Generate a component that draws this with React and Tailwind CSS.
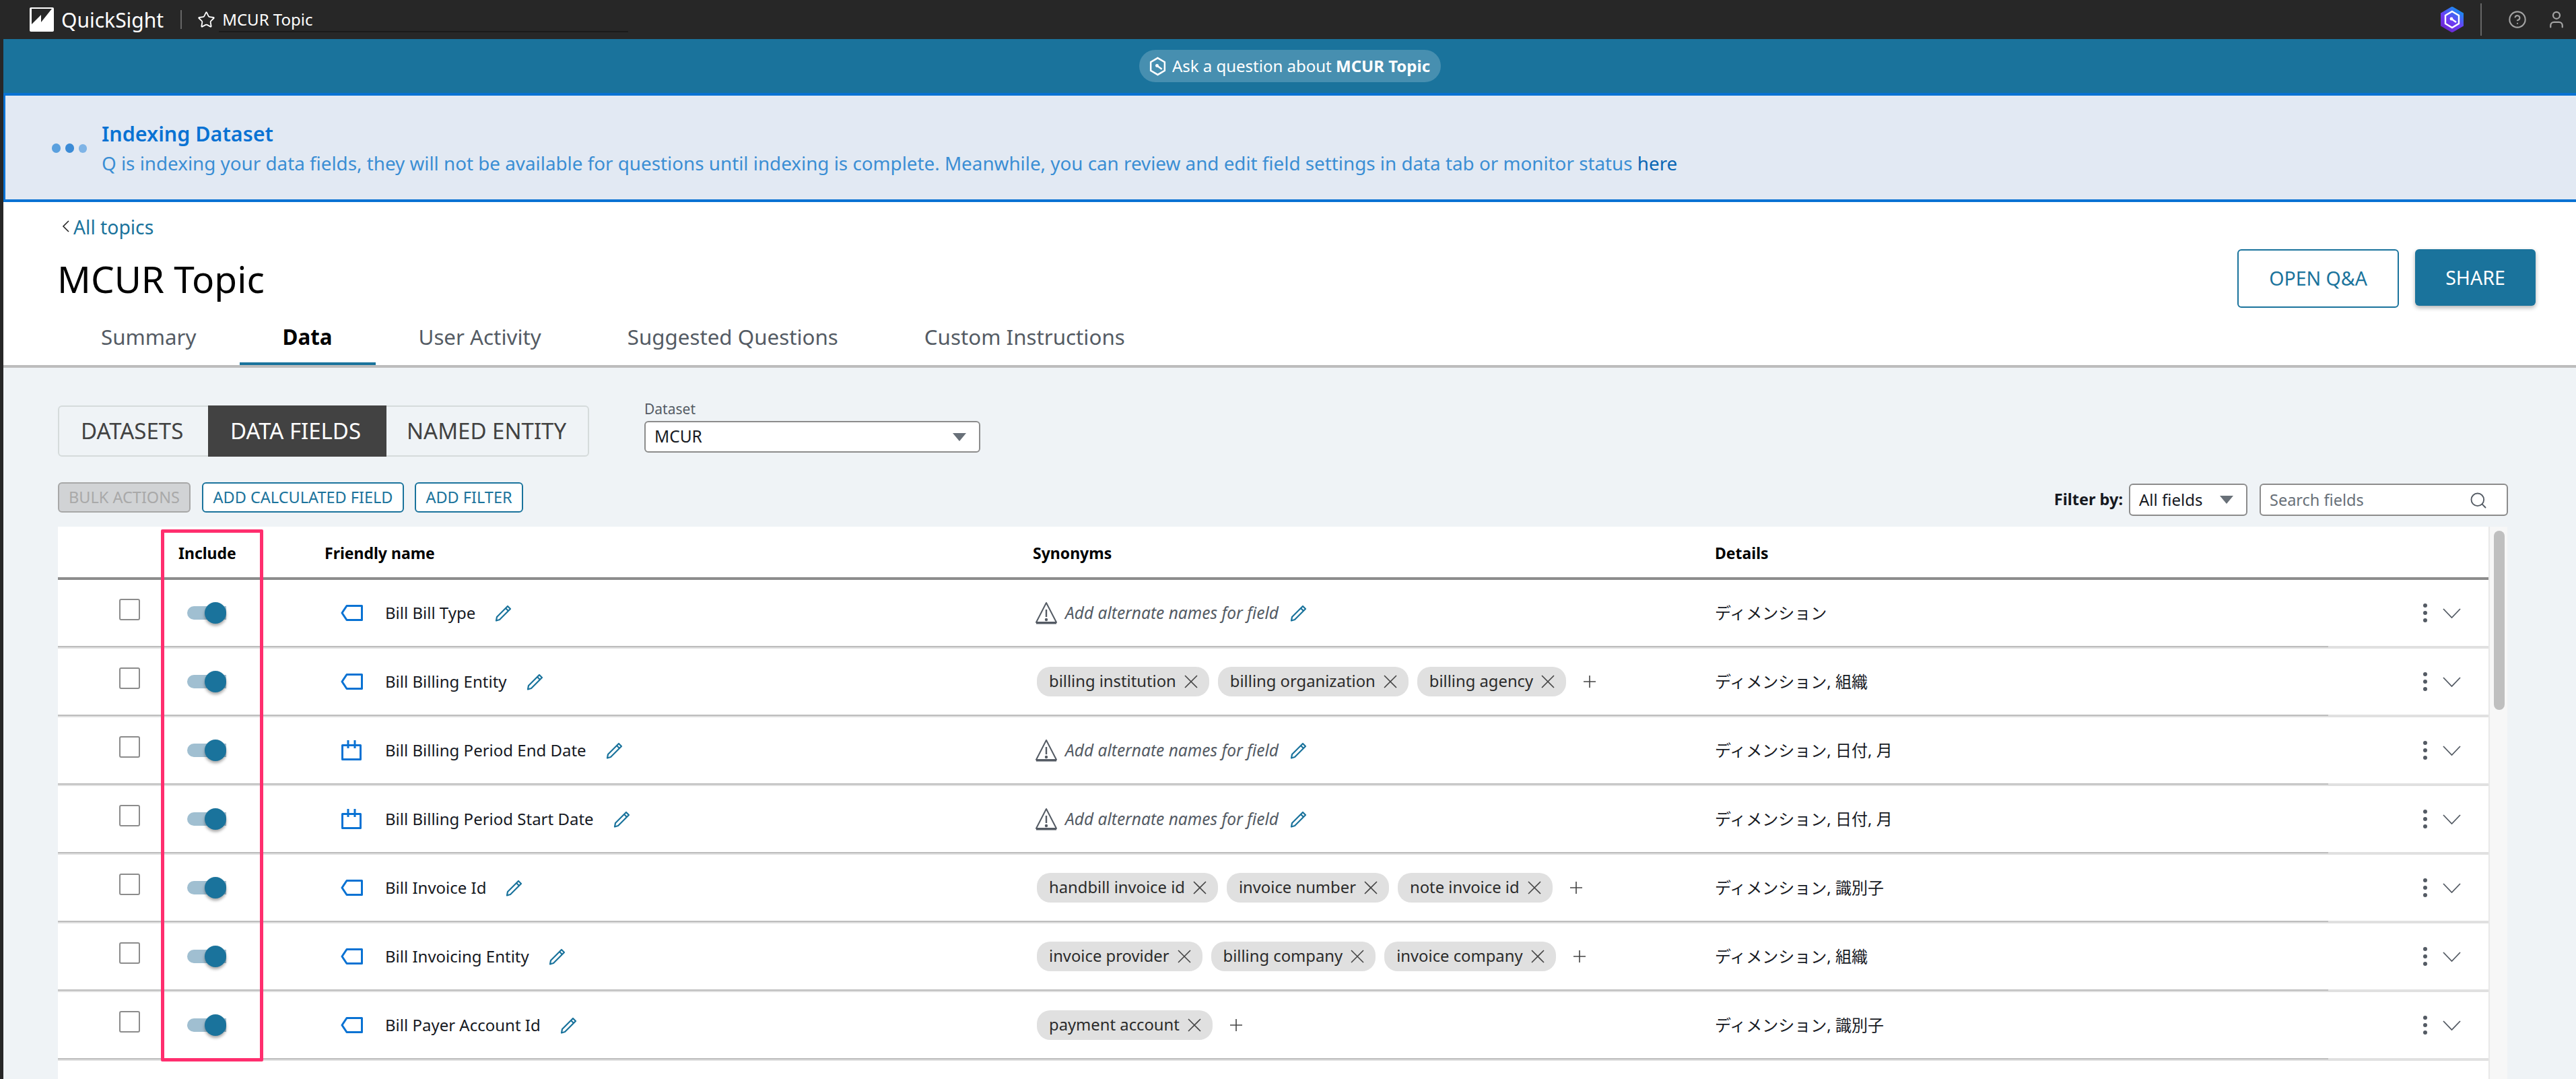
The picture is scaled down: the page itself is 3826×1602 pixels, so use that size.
import React from "react";
import { Search, Star, CircleHelp, User } from "lucide-react";

const FONT = "font-['Noto_Sans','Noto_Sans_CJK_JP',sans-serif]";

const rows = [
  { name: "Bill Bill Type", icon: "tag", details: "ディメンション" },
  { name: "Bill Billing Entity", icon: "tag", chips: ["billing institution", "billing organization", "billing agency"], details: "ディメンション, 組織" },
  { name: "Bill Billing Period End Date", icon: "date", details: "ディメンション, 日付, 月" },
  { name: "Bill Billing Period Start Date", icon: "date", details: "ディメンション, 日付, 月" },
  { name: "Bill Invoice Id", icon: "tag", chips: ["handbill invoice id", "invoice number", "note invoice id"], details: "ディメンション, 識別子" },
  { name: "Bill Invoicing Entity", icon: "tag", chips: ["invoice provider", "billing company", "invoice company"], details: "ディメンション, 組織" },
  { name: "Bill Payer Account Id", icon: "tag", chips: ["payment account"], details: "ディメンション, 識別子" },
];

function HexIcon({ className, fill }) {
  return (
    <svg viewBox={fill ? "0 0 34 38" : "5 5 24 28"} className={className}>
      <defs>
        <linearGradient id="hexgrad" x1="0.8" y1="0" x2="0.2" y2="1">
          <stop offset="0" stopColor="#0a9cf0" />
          <stop offset="0.55" stopColor="#6d3cf5" />
          <stop offset="1" stopColor="#6a22c8" />
        </linearGradient>
      </defs>
      {fill && <path d="M17 0 L34 10 V28 L17 38 L0 28 V10 Z" fill="url(#hexgrad)" stroke="url(#hexgrad)" strokeLinejoin="round" />}
      <path d="M17 7 L27 13 V25 L17 31 L7 25 V13 Z" fill="none" stroke="#fff" strokeWidth="2.4" />
      <path d="M16 18 L23 23" stroke="#fff" strokeWidth="2.4" />
      <circle cx="16" cy="18" r="2.4" fill="#fff" />
    </svg>
  );
}

function Pencil() {
  return (
    <svg viewBox="0 0 25 25" className="w-[25px] h-[25px] shrink-0" fill="none" stroke="#1a739c" strokeWidth="2.2">
      <path d="M19 2 L23 6 L7 22 L2 23.5 L3 18 Z" strokeLinejoin="round" />
      <path d="M16 5 L20 9" />
    </svg>
  );
}

function FieldIcon({ type }) {
  if (type === "date") {
    return (
      <svg viewBox="0 0 30 30" className="ml-[1px] mr-[2px] w-[30px] h-[30px] shrink-0" fill="none" stroke="#0972d3" strokeWidth="3">
        <path d="M1.5 7.5 H28.5 V28.5 H1.5 Z" strokeLinejoin="round" />
        <path d="M10 0 V12 M20 0 V12" />
      </svg>
    );
  }
  return (
    <svg viewBox="0 0 33 24" className="w-[33px] h-[24px] shrink-0" fill="none" stroke="#0972d3" strokeWidth="3">
      <path d="M31.5 1.5 H9 L2 12 L9 22.5 H31.5 Z" strokeLinejoin="round" />
    </svg>
  );
}

function Warning() {
  return (
    <svg viewBox="0 0 34 34" className="w-[34px] h-[34px] shrink-0" fill="none" stroke="#545b64" strokeWidth="2">
      <path d="M17 2 L32 31 H2 Z" strokeLinejoin="round" />
      <path d="M2 32 H32" strokeWidth="3" />
      <path d="M17 12 V23" strokeWidth="2.4" />
      <circle cx="17" cy="27" r="1.2" fill="#545b64" />
    </svg>
  );
}

function Caret({ className }) {
  return <span className={`w-0 h-0 border-x-[10px] border-x-transparent border-t-[12px] border-t-[#687078] ${className || ""}`} />;
}

function Chip({ label }) {
  return (
    <span className="flex items-center gap-[12px] h-[44px] pl-[18px] pr-[17px] rounded-[20px] bg-[#e0e0e0] text-[23.8px] text-[#2b2b2b] whitespace-nowrap">
      {label}
      <svg viewBox="0 0 20 20" className="w-[20px] h-[20px]" fill="none" stroke="#444" strokeWidth="1.6">
        <path d="M1 1 L19 19 M19 1 L1 19" />
      </svg>
    </span>
  );
}

function Row({ row }) {
  return (
    <div className="flex flex-col h-[102px]">
      <div className="flex-1 flex items-center">
        <div className="w-[153px] shrink-0 pb-[10px] pl-[91px]">
          <div className="w-[31px] h-[32px] rounded-[3px] border-2 border-[#8c8c8c] bg-white" />
        </div>
        <div className="w-[152px] shrink-0 pl-[39px]">
          <div className="relative w-[58px] h-[20px] rounded-l-full bg-[#a0bfd1]">
            <div className="absolute right-0 top-[-6px] w-[32px] h-[32px] rounded-full bg-[#1a739c] shadow-[0_3px_4px_rgba(0,0,0,0.35)]" />
          </div>
        </div>
        <div className="w-[1143px] shrink-0 pl-[115px] flex items-center">
          <FieldIcon type={row.icon} />
          <span className="ml-[33px] mr-[29px] text-[24px] text-[#16191f] whitespace-nowrap">{row.name}</span>
          <Pencil />
        </div>
        <div className="w-[1013px] shrink-0 flex items-center">
          {row.chips ? (
            <div className="flex items-center gap-[13px] pl-[6px]">
              {row.chips.map((c) => (
                <Chip key={c} label={c} />
              ))}
              <svg viewBox="0 0 18 18" className="ml-[13px] w-[18px] h-[18px]" fill="none" stroke="#444" strokeWidth="1.6">
                <path d="M9 0 V18 M0 9 H18" />
              </svg>
            </div>
          ) : (
            <div className="flex items-center pl-[3px]">
              <Warning />
              <span className="ml-[11px] mr-[17px] text-[24.5px] italic text-[#545b64] whitespace-nowrap">Add alternate names for field</span>
              <Pencil />
            </div>
          )}
        </div>
        <div className="flex-1 text-[24px] text-[#16191f] whitespace-nowrap">{row.details}</div>
        <div className="flex flex-col gap-[5px] mr-[23px]">
          <span className="w-[6px] h-[6px] rounded-full bg-[#545b64]" />
          <span className="w-[6px] h-[6px] rounded-full bg-[#545b64]" />
          <span className="w-[6px] h-[6px] rounded-full bg-[#545b64]" />
        </div>
        <svg viewBox="0 0 27 15" className="w-[27px] h-[15px] mr-[41px]" fill="none" stroke="#545b64" strokeWidth="1.8">
          <path d="M1 1 L13.5 14 L26 1" />
        </svg>
      </div>
      <div className="h-[4px] bg-[#e0e0e0]">
        <div className="h-[2px] w-[3372px] bg-[#bdbdbd]" />
      </div>
    </div>
  );
}

export default function App() {
  return (
    <div className={`${FONT} relative w-[3826px] h-[1602px] overflow-hidden flex flex-col bg-[#eff3f6]`}>
      {/* top bar */}
      <header className="h-[58px] shrink-0 flex items-center bg-[#272727] relative pl-[44px]">
        <svg viewBox="0 0 36 36" className="w-[36px] h-[36px]">
          <rect width="36" height="36" rx="2" fill="#fff" />
          <path d="M3 2 H33 L17 22 V11 L3 25 Z" fill="#272727" />
        </svg>
        <span className="ml-[11px] text-[30px] text-white">QuickSight</span>
        <div className="ml-[25px] w-[2px] h-[28px] bg-[#666]" />
        <Star className="ml-[23px] w-[27px] h-[27px] text-white" strokeWidth={1.6} />
        <span className="ml-[10px] text-[24px] text-white">MCUR Topic</span>
        <div className="absolute left-[325px] top-[46px] w-[608px] h-[2px] bg-[#1a1a1a]" />
        <div className="ml-auto flex items-center">
          <HexIcon className="w-[34px] h-[38px]" fill />
          <div className="ml-[25px] w-[2px] h-[48px] bg-[#666]" />
          <CircleHelp className="ml-[39px] w-[28px] h-[28px] text-[#a3a3a3]" strokeWidth={1.8} />
          <User className="ml-[29px] mr-[14px] w-[30px] h-[30px] text-[#a3a3a3]" strokeWidth={1.8} />
        </div>
      </header>

      <div className="flex-1 flex min-h-0">
        <div className="w-[5px] shrink-0 bg-[#272727]" />
        <div className="flex-1 min-w-0 flex flex-col">
          {/* ask bar */}
          <div className="h-[80px] shrink-0 flex items-center justify-center bg-[#1a739c]">
            <div className="h-[48px] w-[448px] rounded-full bg-[#478fb0] flex items-center justify-center gap-[9px] text-[24px] text-white whitespace-nowrap">
              <HexIcon className="w-[25px] h-[29px]" />
              <span>
                Ask a question about <b className="font-bold">MCUR Topic</b>
              </span>
            </div>
          </div>

          {/* indexing banner */}
          <div className="h-[162px] shrink-0 flex items-center bg-[#e2e9f3] border-y-4 border-l-[3px] border-[#0972d3]">
            <div className="ml-[69px] flex items-center gap-[7px] mt-[2px]">
              <span className="w-[13px] h-[14px] rounded-full bg-[#5aa0de]" />
              <span className="w-[13px] h-[14px] rounded-full bg-[#3b8bd6]" />
              <span className="w-[12px] h-[13px] rounded-full bg-[#7fb4e6]" />
            </div>
            <div className="ml-[22px]">
              <div className="text-[30.5px] leading-[40px] font-semibold text-[#0972d3]">Indexing Dataset</div>
              <div className="mt-[6px] text-[27.8px] leading-[36px] text-[#3a8ed4]">
                Q is indexing your data fields, they will not be available for questions until indexing is complete. Meanwhile, you can review and edit field settings in data tab or monitor status <span className="text-[#0b66b3]">here</span>
              </div>
            </div>
          </div>

          {/* page header */}
          <div className="h-[246px] shrink-0 bg-white border-b-4 border-[#bdbdbd] relative flex flex-col">
            <div className="flex items-center mt-[20px] ml-[87px] text-[28.3px] leading-[34px] text-[#1a739c]">
              <svg viewBox="0 0 11 18" className="w-[11px] h-[18px] -mt-[2px]" fill="none" stroke="#222" strokeWidth="1.6">
                <path d="M10 1 L2 9 L10 17" />
              </svg>
              <span className="ml-[6px]">All topics</span>
            </div>
            <h1 className="mt-[26px] ml-[80px] text-[55px] leading-[68px] font-normal text-black">MCUR Topic</h1>
            <nav className="mt-auto ml-[81px] flex text-[31.3px] text-[#545b64]">
              <span className="h-[64px] px-[64px] pb-[19px] flex items-center">Summary</span>
              <span className="h-[64px] px-[64px] pb-[15px] flex items-center font-bold text-black border-b-4 border-[#1a739c]">Data</span>
              <span className="h-[64px] px-[64px] pb-[19px] flex items-center">User Activity</span>
              <span className="h-[64px] px-[64px] pb-[19px] flex items-center">Suggested Questions</span>
              <span className="h-[64px] px-[64px] pb-[19px] flex items-center">Custom Instructions</span>
            </nav>
            <div className="absolute right-[60px] top-[70px] flex items-start gap-[24px] text-[28.5px]">
              <button className="w-[240px] h-[87px] rounded-[6px] border-2 border-[#1a739c] bg-white text-[#1a739c]">OPEN Q&amp;A</button>
              <button className="w-[179px] h-[84px] rounded-[6px] bg-[#1a739c] text-white shadow-[0_3px_6px_rgba(0,0,0,0.3)]">SHARE</button>
            </div>
          </div>

          {/* content */}
          <div className="flex-1 min-h-0 pl-[81px] flex flex-col">
            <div className="flex mt-[56px] items-start">
              <div className="flex h-[76px] w-[789px] rounded-[6px] border-2 border-[#d5dbdb] text-[33px] text-[#424242] items-center">
                <span className="w-[221px] pl-[32px]">DATASETS</span>
                <span className="w-[265px] h-[76px] -my-[2px] pl-[33px] flex items-center bg-[#424242] text-white">DATA FIELDS</span>
                <span className="pl-[30px]">NAMED ENTITY</span>
              </div>
              <div className="ml-[82px] -mt-[9px]">
                <div className="text-[21px] leading-[28px] text-[#545b64]">Dataset</div>
                <div className="mt-[4px] w-[499px] h-[47px] rounded-[6px] border-2 border-[#8c8c8c] bg-white flex items-center px-[13px] text-[24.5px] text-[#16191f]">
                  MCUR
                  <Caret className="ml-auto mr-[6px]" />
                </div>
              </div>
            </div>

            <div className="flex items-start mt-[38px] h-[50px] text-[23.5px]">
              <button className="w-[197px] h-[45px] rounded-[6px] border-2 border-[#a7a7a7] bg-[#d1d3d5] text-[#a9a9a9]">BULK ACTIONS</button>
              <button className="ml-[17px] w-[300px] h-[45px] rounded-[6px] border-2 border-[#1a739c] bg-white text-[#1a739c]">ADD CALCULATED FIELD</button>
              <button className="ml-[16px] w-[161px] h-[45px] rounded-[6px] border-2 border-[#1a739c] bg-white text-[#1a739c]">ADD FILTER</button>
              <span className="ml-auto mt-[8px] font-bold text-[23.5px] leading-[34px] text-[#16191f]">Filter by:</span>
              <div className="mt-[2px] ml-[9px] w-[176px] h-[48px] rounded-[6px] border-2 border-[#8c8c8c] bg-white flex items-center pl-[13px] text-[24px] text-[#16191f]">
                All fields
                <Caret className="ml-auto mr-[19px]" />
              </div>
              <div className="mt-[2px] ml-[18px] mr-[101px] w-[369px] h-[48px] rounded-[6px] border-2 border-[#8c8c8c] bg-white flex items-center pl-[13px] pt-[2px] text-[23.5px] text-[#687078]">
                Search fields
                <Search className="ml-auto mr-[28px] w-[28px] h-[28px] text-[#545b64]" strokeWidth={1.6} />
              </div>
            </div>

            {/* table */}
            <div className="mt-[16px] flex-1 min-h-0 flex">
              <div className="w-[3610px] shrink-0 bg-white">
                <div className="h-[79px] flex items-center border-b-4 border-[#8c8c8c] text-[23px] font-bold text-black pt-[3px]">
                  <span className="ml-[179px] w-[217px]">Include</span>
                  <span className="w-[1052px]">Friendly name</span>
                  <span className="w-[1013px]">Synonyms</span>
                  <span>Details</span>
                </div>
                {rows.map((r) => (
                  <Row key={r.name} row={r} />
                ))}
              </div>
              <div className="w-[28px] shrink-0 bg-[#f7f7f7] border-l-2 border-[#e8e8e8] pt-[6px] pl-[6px]">
                <div className="w-[16px] h-[266px] rounded-full bg-[#bfbfbf]" />
              </div>
            </div>
          </div>
        </div>
      </div>

      {/* red highlight drawn over the Include column */}
      <div className="absolute left-[239px] top-[786px] w-[152px] h-[790px] rounded-[2px] border-[5px] border-[#ff2e6e]" />
    </div>
  );
}
